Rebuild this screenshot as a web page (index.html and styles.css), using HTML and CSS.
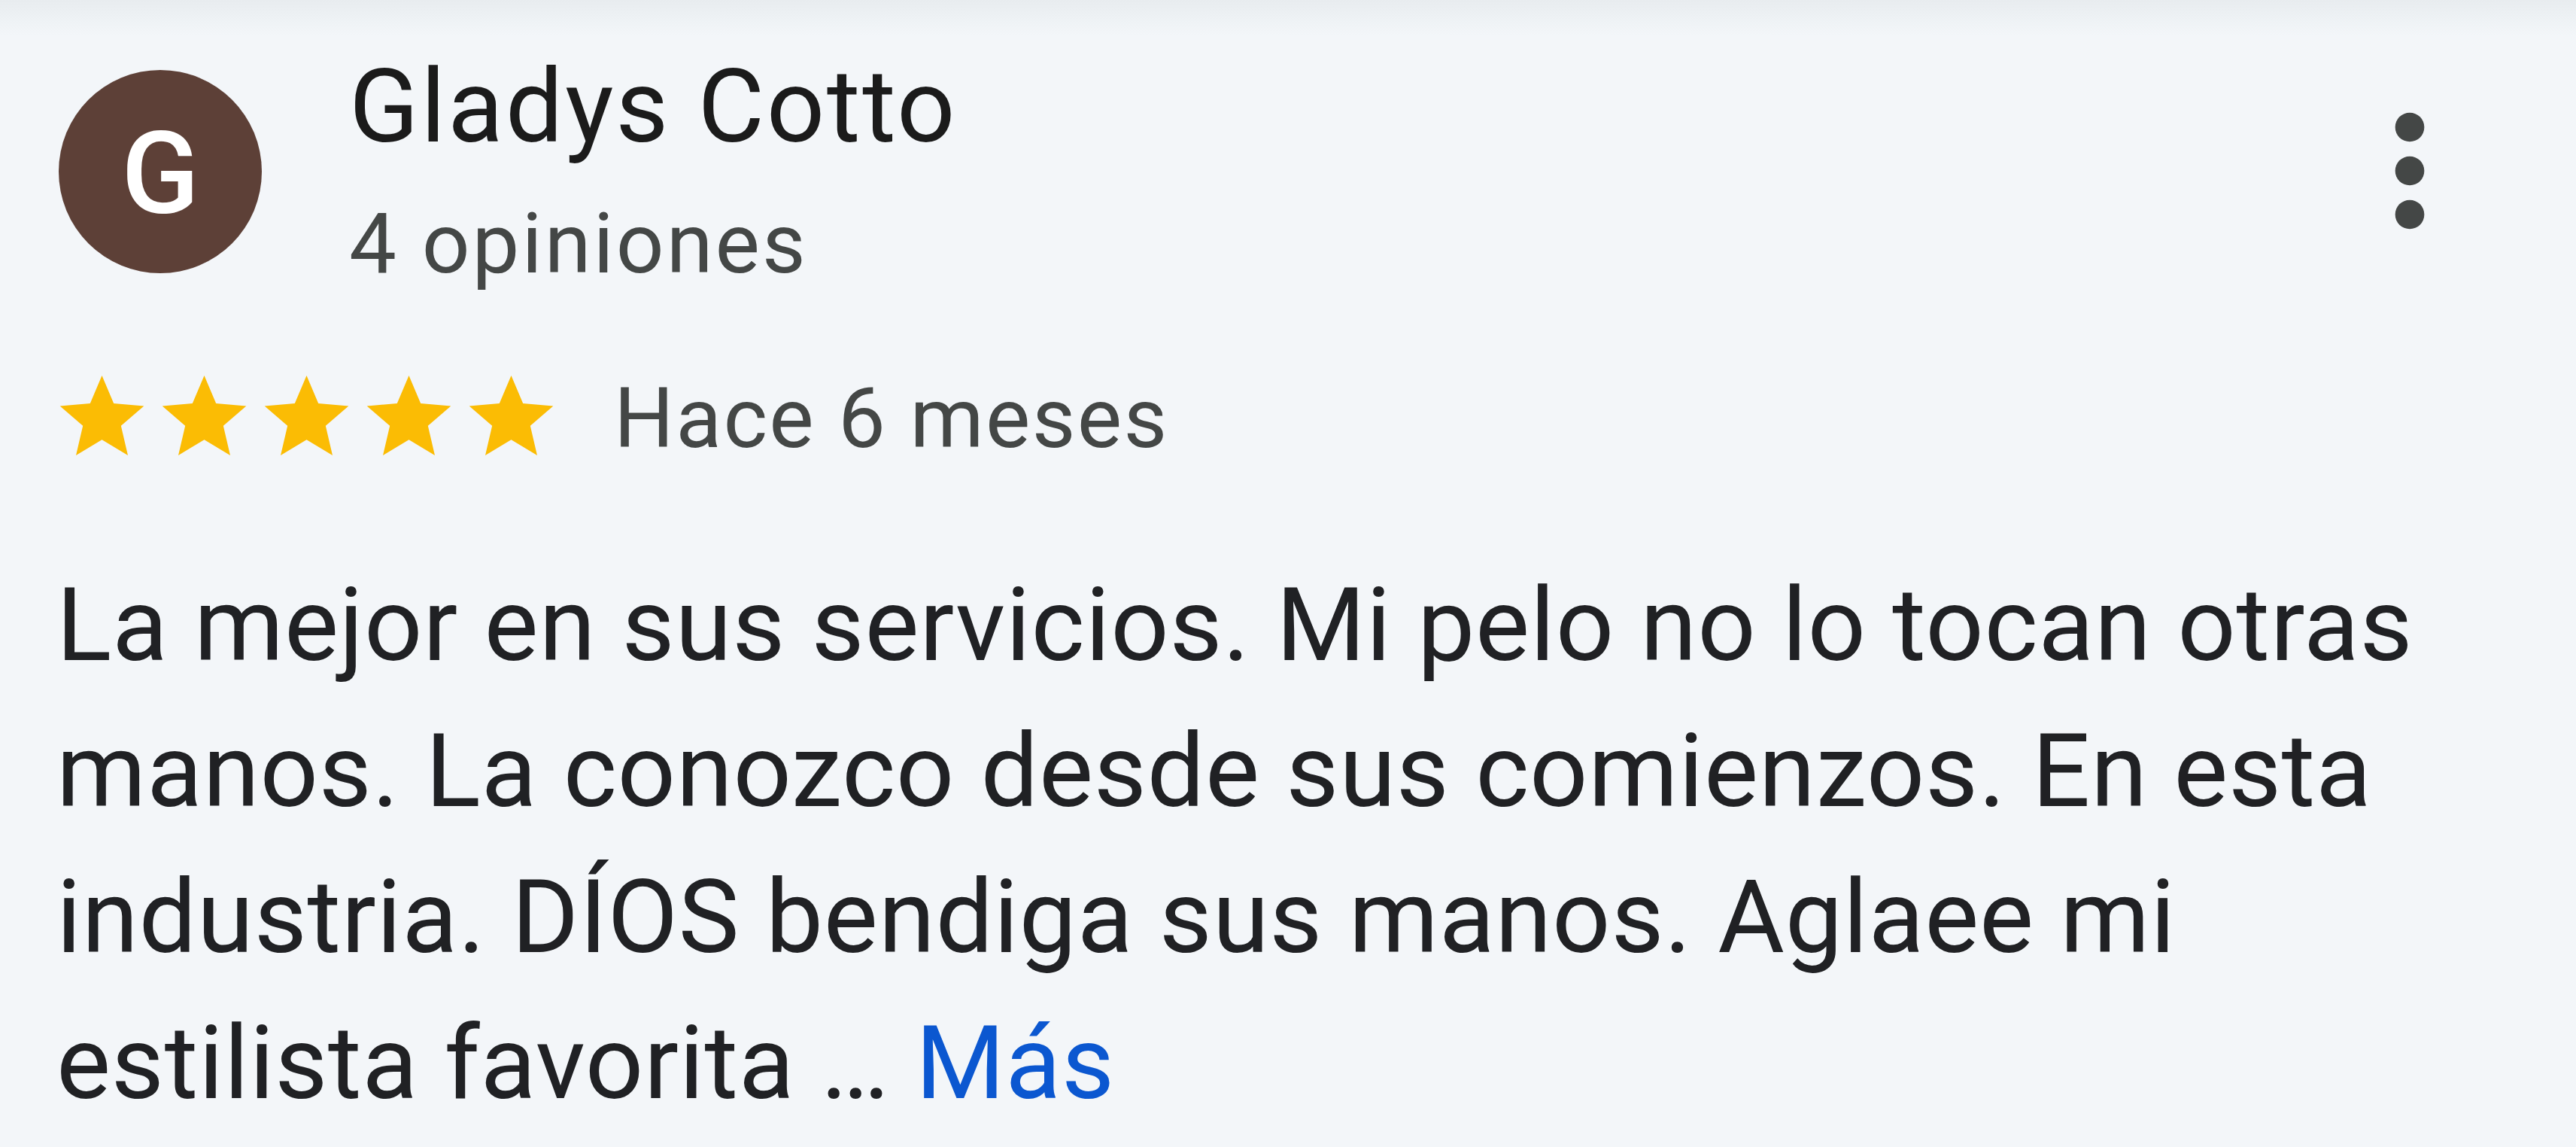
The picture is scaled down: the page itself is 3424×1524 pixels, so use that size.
FILE: index.html
```html
<!DOCTYPE html>
<html lang="es">
<head>
<meta charset="utf-8">
<title>Opinión</title>
<link rel="stylesheet" href="styles.css">
</head>
<body>
<div class="topshade"></div>
<article class="review">
  <header class="review-head">
    <div class="avatar">G</div>
    <div class="author">
      <div class="author-name">Gladys Cotto</div>
      <div class="author-meta">4 opiniones</div>
    </div>
    <button class="more" aria-label="Más opciones">
      <svg viewBox="0 0 24 24" width="232" height="232"><circle cx="12" cy="6" r="2"/><circle cx="12" cy="12" r="2"/><circle cx="12" cy="18" r="2"/></svg>
    </button>
  </header>
  <div class="rating">
    <div class="stars">
      <svg class="star" viewBox="2 2 20 19"><path d="M12 17.27L18.18 21l-1.64-7.03L22 9.24l-7.19-.61L12 2 9.19 8.63 2 9.24l5.46 4.73L5.82 21z"/></svg>
      <svg class="star" viewBox="2 2 20 19"><path d="M12 17.27L18.18 21l-1.64-7.03L22 9.24l-7.19-.61L12 2 9.19 8.63 2 9.24l5.46 4.73L5.82 21z"/></svg>
      <svg class="star" viewBox="2 2 20 19"><path d="M12 17.27L18.18 21l-1.64-7.03L22 9.24l-7.19-.61L12 2 9.19 8.63 2 9.24l5.46 4.73L5.82 21z"/></svg>
      <svg class="star" viewBox="2 2 20 19"><path d="M12 17.27L18.18 21l-1.64-7.03L22 9.24l-7.19-.61L12 2 9.19 8.63 2 9.24l5.46 4.73L5.82 21z"/></svg>
      <svg class="star" viewBox="2 2 20 19"><path d="M12 17.27L18.18 21l-1.64-7.03L22 9.24l-7.19-.61L12 2 9.19 8.63 2 9.24l5.46 4.73L5.82 21z"/></svg>
    </div>
    <span class="date">Hace 6 meses</span>
  </div>
  <p class="review-text">La mejor en sus servicios. Mi pelo no lo tocan otras manos. La conozco desde sus comienzos. En esta industria. DÍOS bendiga sus manos. Aglaee mi estilista favorita …&nbsp;<a class="more-link" href="#">Más</a></p>
</article>
</body>
</html>
```
FILE: styles.css
```css
html, body {
  margin: 0;
  padding: 0;
}
body {
  width: 3424px;
  height: 1524px;
  overflow: hidden;
  background: #f3f6f9;
  font-family: Roboto, "Noto Sans", "Liberation Sans", sans-serif;
  position: relative;
}
.topshade {
  position: absolute;
  left: 0;
  top: 0;
  right: 0;
  height: 48px;
  background: linear-gradient(to bottom, #e8ecef 0%, #edf1f4 45%, rgba(243,246,249,0) 100%);
  pointer-events: none;
}
.review {
  padding: 0 105px 0 78px;
}
.review-head {
  display: flex;
  align-items: flex-start;
  padding-top: 62px;
}
.avatar {
  flex: none;
  width: 270px;
  height: 270px;
  margin-top: 31px;
  border-radius: 50%;
  background: #5d4037;
  color: #ffffff;
  display: flex;
  align-items: center;
  justify-content: center;
  font-size: 152px;
  font-weight: 500;
  line-height: 1;
  padding-top: 6px;
  box-sizing: border-box;
}
.author {
  flex: 1;
  margin-left: 116px;
}
.author-name {
  font-size: 136px;
  line-height: 160px;
  letter-spacing: 2.7px;
  color: #1b1b1b;
}
.author-meta {
  margin-top: 22px;
  font-size: 112px;
  line-height: 160px;
  letter-spacing: 3px;
  color: #444746;
}
.more {
  flex: none;
  margin-top: 49px;
  padding: 0;
  border: 0;
  background: none;
  width: 232px;
  height: 232px;
  fill: #444746;
}
.more svg {
  display: block;
}
.rating {
  display: flex;
  align-items: flex-start;
  margin-top: 84px;
  height: 136px;
}
.stars {
  display: flex;
  gap: 23px;
  margin-top: 11px;
  margin-left: 1px;
}
.star {
  display: block;
  width: 113px;
  height: 106px;
  fill: #fbbc04;
}
.date {
  margin-left: 80px;
  font-size: 112px;
  line-height: 136px;
  letter-spacing: 2.3px;
  color: #444746;
}
.review-text {
  margin: 110px 0 0 -3px;
  font-size: 136px;
  line-height: 194px;
  letter-spacing: 0.7px;
  color: #202124;
  width: 3220px;
}
.more-link {
  color: #0b57d0;
  text-decoration: none;
}
```
